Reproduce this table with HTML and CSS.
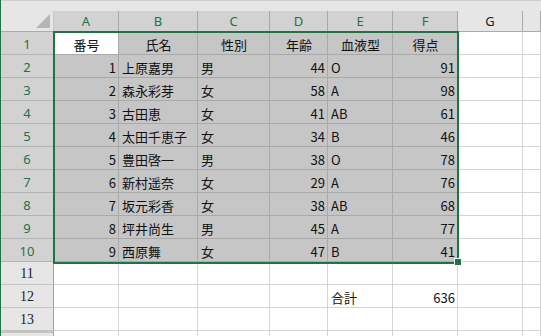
FILE: index.html
```html
<!DOCTYPE html>
<html lang="ja">
<head>
    <meta charset="UTF-8">
    <title>Book1 - Excel</title>
    <link rel="stylesheet" href="styles.css">
</head>
<body>
<div class="window">
    <div class="topbar"></div>

    <div class="sheet">
        <!-- column headers -->
        <div class="corner"><span class="tri"></span></div>
        <div class="h s">A</div>
        <div class="h s">B</div>
        <div class="h s">C</div>
        <div class="h s">D</div>
        <div class="h s">E</div>
        <div class="h s">F</div>
        <div class="h">G</div>
        <div class="h"></div>

        <!-- row 1 : titles -->
        <div class="rh s">1</div>
        <div class="c m active">番号</div>
        <div class="c m s">氏名</div>
        <div class="c m s">性別</div>
        <div class="c m s">年齢</div>
        <div class="c m s">血液型</div>
        <div class="c m s">得点</div>
        <div class="c"></div>
        <div class="c"></div>

        <div class="rh s">2</div>
        <div class="c r s">1</div>
        <div class="c s">上原嘉男</div>
        <div class="c s">男</div>
        <div class="c r s">44</div>
        <div class="c s">O</div>
        <div class="c r s">91</div>
        <div class="c"></div>
        <div class="c"></div>

        <div class="rh s">3</div>
        <div class="c r s">2</div>
        <div class="c s">森永彩芽</div>
        <div class="c s">女</div>
        <div class="c r s">58</div>
        <div class="c s">A</div>
        <div class="c r s">98</div>
        <div class="c"></div>
        <div class="c"></div>

        <div class="rh s">4</div>
        <div class="c r s">3</div>
        <div class="c s">古田恵</div>
        <div class="c s">女</div>
        <div class="c r s">41</div>
        <div class="c s">AB</div>
        <div class="c r s">61</div>
        <div class="c"></div>
        <div class="c"></div>

        <div class="rh s">5</div>
        <div class="c r s">4</div>
        <div class="c s">太田千恵子</div>
        <div class="c s">女</div>
        <div class="c r s">34</div>
        <div class="c s">B</div>
        <div class="c r s">46</div>
        <div class="c"></div>
        <div class="c"></div>

        <div class="rh s">6</div>
        <div class="c r s">5</div>
        <div class="c s">豊田啓一</div>
        <div class="c s">男</div>
        <div class="c r s">38</div>
        <div class="c s">O</div>
        <div class="c r s">78</div>
        <div class="c"></div>
        <div class="c"></div>

        <div class="rh s">7</div>
        <div class="c r s">6</div>
        <div class="c s">新村遥奈</div>
        <div class="c s">女</div>
        <div class="c r s">29</div>
        <div class="c s">A</div>
        <div class="c r s">76</div>
        <div class="c"></div>
        <div class="c"></div>

        <div class="rh s">8</div>
        <div class="c r s">7</div>
        <div class="c s">坂元彩香</div>
        <div class="c s">女</div>
        <div class="c r s">38</div>
        <div class="c s">AB</div>
        <div class="c r s">68</div>
        <div class="c"></div>
        <div class="c"></div>

        <div class="rh s">9</div>
        <div class="c r s">8</div>
        <div class="c s">坪井尚生</div>
        <div class="c s">男</div>
        <div class="c r s">45</div>
        <div class="c s">A</div>
        <div class="c r s">77</div>
        <div class="c"></div>
        <div class="c"></div>

        <div class="rh s">10</div>
        <div class="c r s">9</div>
        <div class="c s">西原舞</div>
        <div class="c s">女</div>
        <div class="c r s">47</div>
        <div class="c s">B</div>
        <div class="c r s">41</div>
        <div class="c"></div>
        <div class="c"></div>

        <div class="rh">11</div>
        <div class="c"></div>
        <div class="c"></div>
        <div class="c"></div>
        <div class="c"></div>
        <div class="c"></div>
        <div class="c"></div>
        <div class="c"></div>
        <div class="c"></div>

        <!-- total -->
        <div class="rh">12</div>
        <div class="c"></div>
        <div class="c"></div>
        <div class="c"></div>
        <div class="c"></div>
        <div class="c">合計</div>
        <div class="c r">636</div>
        <div class="c"></div>
        <div class="c"></div>

        <div class="rh">13</div>
        <div class="c"></div>
        <div class="c"></div>
        <div class="c"></div>
        <div class="c"></div>
        <div class="c"></div>
        <div class="c"></div>
        <div class="c"></div>
        <div class="c"></div>

        <!-- next row, only its top edge shows -->
        <div class="rh last"></div>
        <div class="c"></div>
        <div class="c"></div>
        <div class="c"></div>
        <div class="c"></div>
        <div class="c"></div>
        <div class="c"></div>
        <div class="c"></div>
        <div class="c"></div>

        <!-- selected range A1:F10 -->
        <div class="selection"></div>
        <div class="handle"></div>
    </div>
</div>
</body>
</html>
```

FILE: styles.css
```css
body {
    margin: 0;
    background: #fff;
    overflow: hidden;
}

.window {
    width: 541px;
    height: 336px;
    box-sizing: border-box;
    border-left: 1px solid #217346;
    overflow: hidden;
    font-family: "Noto Sans CJK JP", "Noto Sans", sans-serif;
    font-size: 13px;
    color: #111;
}

.topbar {
    height: 11px;
    box-sizing: border-box;
    background: #e6e6e6;
    border-top: 1px solid #cfcfcf;
}

.sheet {
    position: relative;
    display: grid;
    grid-template-columns: 53px 65px 79px 72px 58px 65px 65px 65px 18px;
    grid-template-rows: 21px repeat(14, 23px);
}

.sheet > div {
    box-sizing: border-box;
    display: flex;
    align-items: center;
    white-space: nowrap;
    overflow: hidden;
}

/* corner box with the select-all triangle */
.corner {
    background: #e6e6e6;
    border-right: 1px solid #c8c8c8;
    border-bottom: 1px solid #ababab;
    position: relative;
}
.tri {
    position: absolute;
    right: 3px;
    bottom: 3px;
    width: 0;
    height: 0;
    border-left: 14px solid transparent;
    border-bottom: 14px solid #b5b5b5;
}

/* column header */
.h {
    justify-content: center;
    background: #e6e6e6;
    border-right: 1px solid #ababab;
    border-bottom: 1px solid #ababab;
    font-family: "Noto Sans", sans-serif;
    color: #222;
}
.h.s {
    background: #d2d2d2;
    color: #217346;
    border-right-color: #a8a8a8;
}

/* row header */
.rh {
    justify-content: center;
    padding-top: 2px;
    background: #e6e6e6;
    border-right: 1px solid #9e9e9e;
    border-bottom: 1px solid #c4c4c4;
    font-family: "Liberation Serif", serif;
    font-size: 14px;
    color: #222;
}
.rh.s {
    background: #d2d2d2;
    color: #217346;
    font-family: "Noto Sans", sans-serif;
    font-size: 13px;
    border-bottom-color: #b4b4b4;
}
.rh.last {
    border-top: 2px solid #c4c4c4;
}

/* cells */
.c {
    padding: 3px 2px 0 3px;
    border-right: 1px solid #d4d4d4;
    border-bottom: 1px solid #d4d4d4;
}
.c.r { justify-content: flex-end; }
.c.m { justify-content: center; }
.c.s {
    background: #c6c6c6;
    border-color: #a9a9a9;
}
.c.active {
    background: #fff;
    border-color: #a9a9a9;
}

/* green frame of the selection and its fill handle */
.selection {
    position: absolute;
    left: 52px;
    top: 20px;
    width: 406px;
    height: 233px;
    border: 2px solid #217346;
}
.handle {
    position: absolute;
    left: 453px;
    top: 247px;
    width: 8px;
    height: 8px;
    background: #217346;
    border: 1px solid #fff;
}
```
